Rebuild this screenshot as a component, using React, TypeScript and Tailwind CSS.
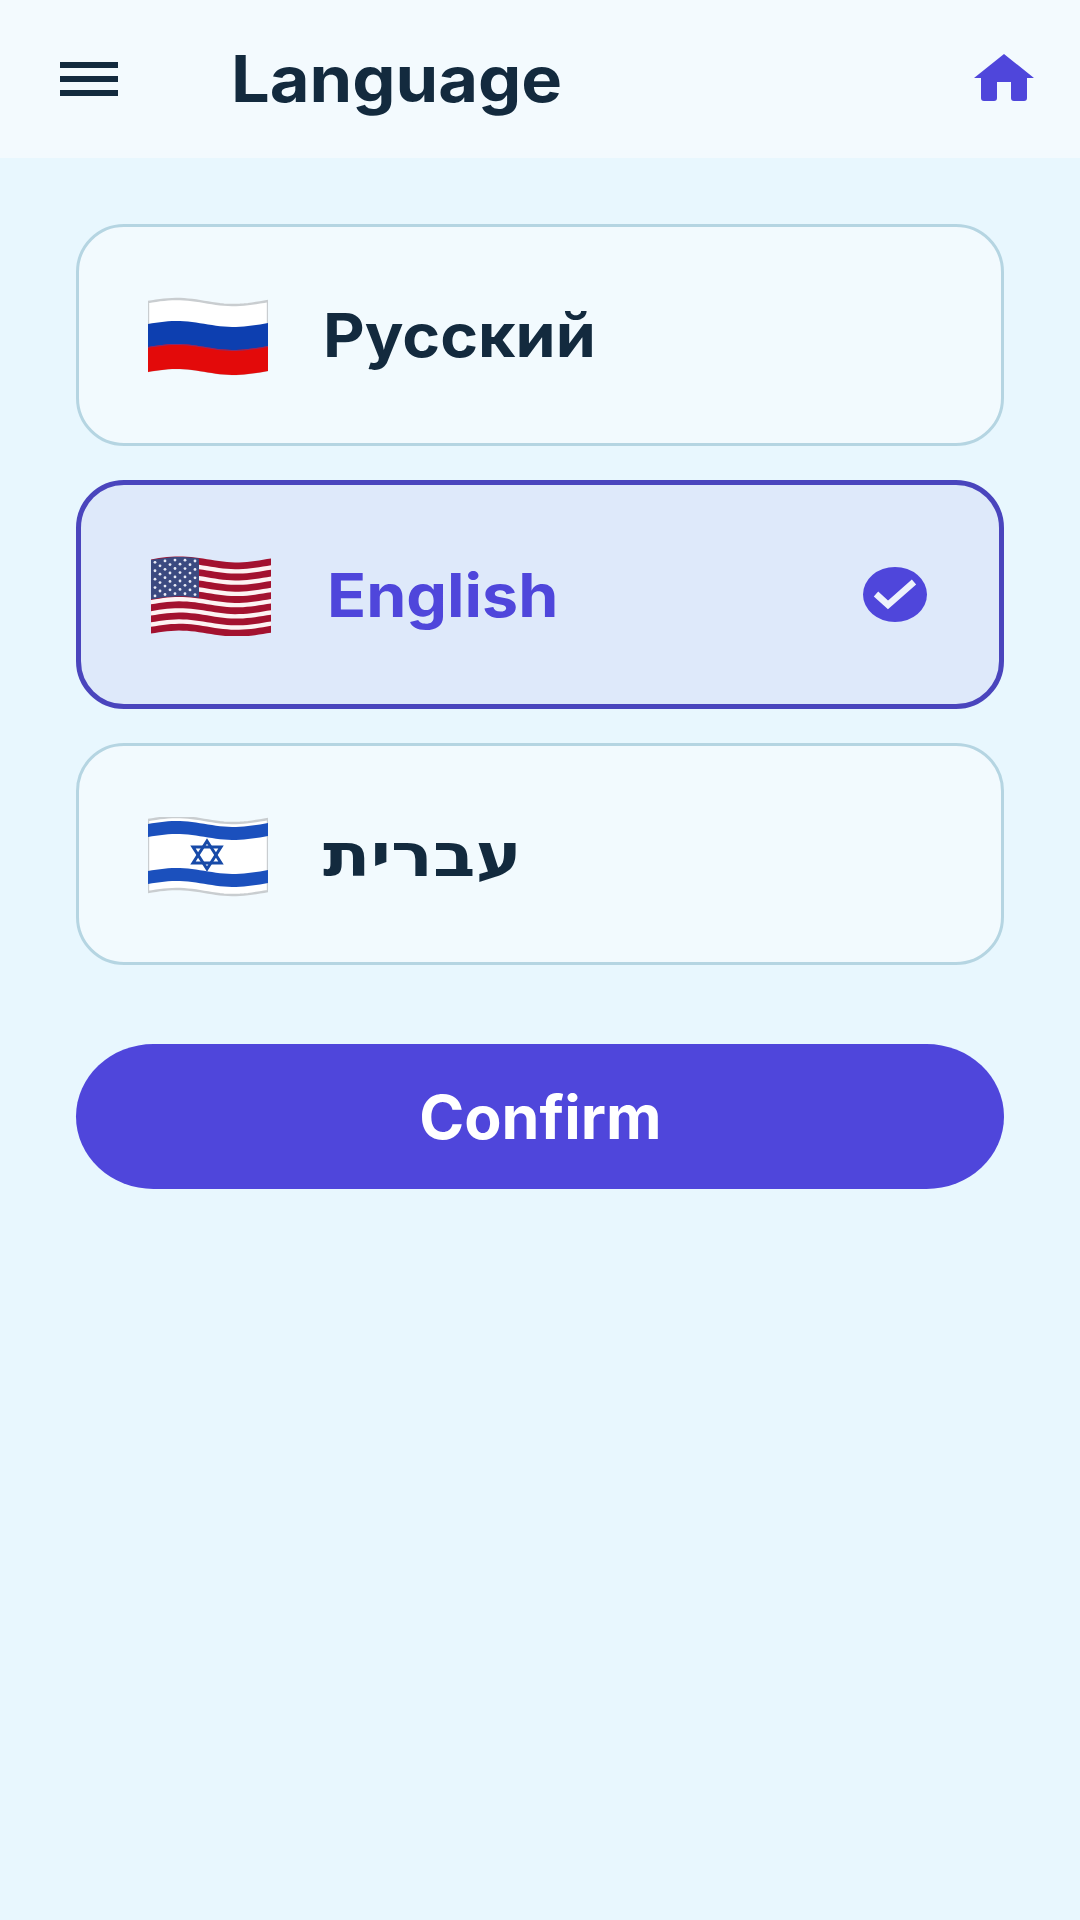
const wave = (x: number, y: number) => y - 3 * Math.sin((x / 120) * 2 * Math.PI * 1.05)

// path of a waving band between two y values
const band = (y0: number, y1: number, x0 = 0, x1 = 120) => {
  const xs: number[] = []
  for (let x = x0; x <= x1; x += 4) xs.push(x)
  const top = xs.map((x) => `${x} ${wave(x, y0).toFixed(2)}`)
  const bottom = [...xs].reverse().map((x) => `${x} ${wave(x, y1).toFixed(2)}`)
  return `M${top.join('L')}L${bottom.join('L')}Z`
}

function RussiaFlag() {
  return (
    <svg viewBox="0 0 120 80" className="w-[120px] h-[80px] shrink-0 mt-[4px]">
      <path d={band(5, 74)} fill="#ffffff" stroke="#c9cdd0" strokeWidth="2.4" />
      <path d={band(27, 51)} fill="#0d3fb0" />
      <path d={band(50, 75)} fill="#e30a0a" />
      <path d={band(50, 51)} fill="#8b2a6a" />
    </svg>
  )
}

function UsaFlag() {
  const stripes = Array.from({ length: 13 }, (_, i) => i)
  const h = 73 / 13
  const stars: [number, number][] = []
  for (let r = 0; r < 9; r++) {
    for (let c = 0; c < 9; c++) {
      if ((r + c) % 2 === 0) stars.push([4 + c * 5, 7 + r * 4.2])
    }
  }
  return (
    <svg viewBox="0 0 120 80" className="w-[120px] h-[80px] shrink-0 mt-[3px]">
      <path d={band(4, 77)} fill="#fdf3f3" />
      {stripes
        .filter((i) => i % 2 === 0)
        .map((i) => (
          <path key={i} d={band(3.4 + i * h, 4.6 + (i + 1) * h)} fill="#a3122f" />
        ))}
      <path d={band(4, 4 + 7 * h, 0, 48)} fill="#3b4a80" />
      {stars.map(([x, y], i) => (
        <circle key={i} cx={x} cy={wave(x, y)} r="1.4" fill="#e9ebf5" />
      ))}
    </svg>
  )
}

function IsraelFlag() {
  return (
    <svg viewBox="0 0 120 80" className="w-[120px] h-[80px] shrink-0 mt-[6px]">
      <path d={band(3, 75)} fill="#ffffff" stroke="#c9cdd0" strokeWidth="2.4" />
      <path d={band(7, 20)} fill="#1b50bd" />
      <path d={band(54, 67)} fill="#1b50bd" />
      <g fill="none" stroke="#174aa8" strokeWidth="3" transform="translate(59 38)">
        <path d="M0 -14L14 8H-14Z" />
        <path d="M0 14L14 -8H-14Z" />
      </g>
    </svg>
  )
}

const languages = [
  { id: 'ru', label: 'Русский', flag: <RussiaFlag />, textClass: 'ml-[55px] flex-1 text-[60px] font-bold text-[#132a3e] origin-left scale-x-[1.073]' },
  { id: 'en', label: 'English', flag: <UsaFlag />, textClass: 'ml-[56px] flex-1 text-[60px] font-bold text-[#4f46db] origin-left scale-x-[1.075]' },
  { id: 'he', label: 'עברית', flag: <IsraelFlag />, textClass: 'ml-[55px] flex-1 text-[60px] font-bold text-[#132a3e] origin-left scale-x-[1.16]' },
]

export default function App() {
  const selected = 'en'

  return (
    <div className="min-h-[1920px] bg-[#e8f7fe] font-['Inter','Noto_Sans','DejaVu_Sans',sans-serif]">
      <header className="h-[158px] bg-[#f3fafe] flex items-center pl-[60px] pr-[46px]">
        <div className="w-[58px] flex flex-col gap-[8px]">
          <div className="h-[6px] bg-[#132a3e]" />
          <div className="h-[6px] bg-[#132a3e]" />
          <div className="h-[6px] bg-[#132a3e]" />
        </div>
        <h1 className="ml-[113px] text-[64px] leading-none font-bold text-[#132a3e] flex-1 origin-left scale-x-[1.071]">Language</h1>
        <svg viewBox="0 0 60 48" className="w-[60px] h-[48px] mb-[2px]">
          <path
            d="M30 0L60 24H53V44a3 3 0 0 1-3 3H40a3 3 0 0 1-3-3V28H23V44a3 3 0 0 1-3 3H10a3 3 0 0 1-3-3V24H0Z"
            fill="#4f46db"
          />
        </svg>
      </header>

      <main className="px-[76px] pt-[66px]">
        <div className="flex flex-col gap-[34px]">
          {languages.map((lang) => {
            const active = lang.id === selected
            return (
              <div
                key={lang.id}
                className={
                  active
                    ? 'h-[229px] rounded-[48px] border-[5px] border-[#4a45bd] bg-[#dee9fa] flex items-center pl-[70px] pr-[72px]'
                    : 'h-[222px] rounded-[48px] border-[3px] border-[#b5d5e2] bg-[#f2fafe] flex items-center pl-[69px] pr-[72px]'
                }
              >
                {lang.flag}
                <span className={lang.textClass}>{lang.label}</span>
                {active && (
                  <svg viewBox="0 0 64 55" className="w-[64px] h-[55px]">
                    <ellipse cx="32" cy="27.5" rx="32" ry="27.5" fill="#4f46db" />
                    <path d="M13 27L25 38L51 15" fill="none" stroke="#eef2fc" strokeWidth="6.5" />
                  </svg>
                )}
              </div>
            )
          })}
        </div>

        <button className="mt-[79px] w-full h-[145px] rounded-[78px/73px] bg-[#4f46db] flex items-center justify-center">
          <span className="text-white text-[60px] font-bold scale-x-[1.015]">Confirm</span>
        </button>
      </main>
    </div>
  )
}
